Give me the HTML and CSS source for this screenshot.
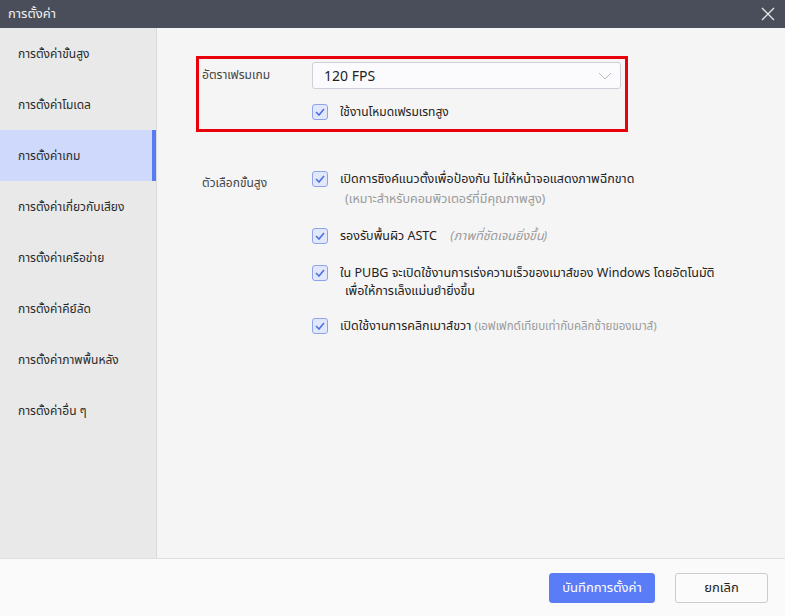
FILE: index.html
```html
<!DOCTYPE html>
<html lang="th">
<head>
    <meta charset="utf-8">
    <title>การตั้งค่า</title>
    <link rel="stylesheet" href="styles.css">
</head>
<body>
    <div class="window">
        <div class="titlebar">
            <div class="title">การตั้งค่า</div>
            <svg class="close" width="14" height="14" viewBox="0 0 14 14">
                <path d="M1 1 L13 13 M13 1 L1 13" stroke="#e6e7ea" stroke-width="1.3" fill="none"/>
            </svg>
        </div>

        <div class="body">
            <div class="sidebar">
                <div class="side-item">การตั้งค่าขั้นสูง</div>
                <div class="side-item">การตั้งค่าโมเดล</div>
                <div class="side-item active">การตั้งค่าเกม</div>
                <div class="side-item">การตั้งค่าเกี่ยวกับเสียง</div>
                <div class="side-item">การตั้งค่าเครือข่าย</div>
                <div class="side-item">การตั้งค่าคีย์ลัด</div>
                <div class="side-item">การตั้งค่าภาพพื้นหลัง</div>
                <div class="side-item">การตั้งค่าอื่น ๆ</div>
            </div>

            <div class="content">
                <div class="highlight">
                    <div class="row">
                        <div class="label">อัตราเฟรมเกม</div>
                        <div class="field">
                            <div class="select">
                                <span>120 FPS</span>
                                <svg width="14" height="8" viewBox="0 0 14 8">
                                    <path d="M1 1 L7 7 L13 1" stroke="#b5b8c2" stroke-width="1" fill="none"/>
                                </svg>
                            </div>
                            <div class="check">
                                <span class="box"><svg width="10" height="8" viewBox="0 0 10 8"><path d="M1 4 L4 7 L9 1" stroke="#4d6fe3" stroke-width="1.6" fill="none"/></svg></span>
                                <span class="text">ใช้งานโหมดเฟรมเรทสูง</span>
                            </div>
                        </div>
                    </div>
                </div>

                <div class="row advanced">
                    <div class="label">ตัวเลือกขั้นสูง</div>
                    <div class="field options">
                        <div class="check">
                            <span class="box"><svg width="10" height="8" viewBox="0 0 10 8"><path d="M1 4 L4 7 L9 1" stroke="#4d6fe3" stroke-width="1.6" fill="none"/></svg></span>
                            <div class="text">เปิดการซิงค์แนวตั้งเพื่อป้องกัน ไม่ให้หน้าจอแสดงภาพฉีกขาด
                                <div class="note sub">(เหมาะสำหรับคอมพิวเตอร์ที่มีคุณภาพสูง)</div>
                            </div>
                        </div>
                        <div class="check">
                            <span class="box"><svg width="10" height="8" viewBox="0 0 10 8"><path d="M1 4 L4 7 L9 1" stroke="#4d6fe3" stroke-width="1.6" fill="none"/></svg></span>
                            <div class="text">รองรับพื้นผิว ASTC <span class="note italic">(ภาพที่ชัดเจนยิ่งขึ้น)</span></div>
                        </div>
                        <div class="check">
                            <span class="box"><svg width="10" height="8" viewBox="0 0 10 8"><path d="M1 4 L4 7 L9 1" stroke="#4d6fe3" stroke-width="1.6" fill="none"/></svg></span>
                            <div class="text">ใน PUBG จะเปิดใช้งานการเร่งความเร็วของเมาส์ของ Windows โดยอัตโนมัติ<br><span class="indent">เพื่อให้การเล็งแม่นยำยิ่งขึ้น</span></div>
                        </div>
                        <div class="check">
                            <span class="box"><svg width="10" height="8" viewBox="0 0 10 8"><path d="M1 4 L4 7 L9 1" stroke="#4d6fe3" stroke-width="1.6" fill="none"/></svg></span>
                            <div class="text">เปิดใช้งานการคลิกเมาส์ขวา <span class="note small">(เอฟเฟกต์เทียบเท่ากับคลิกซ้ายของเมาส์)</span></div>
                        </div>
                    </div>
                </div>
            </div>
        </div>

        <div class="footer">
            <button class="btn primary">บันทึกการตั้งค่า</button>
            <button class="btn">ยกเลิก</button>
        </div>
    </div>
</body>
</html>
```

FILE: styles.css
```css
body {
    margin: 0;
    font-family: "Noto Sans", "Noto Sans Thai", "Noto Sans Thai UI", Tahoma, sans-serif;
    color: #333;
    font-size: 12px;
}
.window {
    width: 785px;
    height: 616px;
    display: flex;
    flex-direction: column;
    background: #fafafa;
    overflow: hidden;
}
.titlebar {
    height: 28px;
    background-color: #4a4e5b;
    color: #f0f0f2;
    display: flex;
    align-items: center;
    justify-content: space-between;
    padding: 0 10px 0 8px;
    flex-shrink: 0;
}
.title {
    font-size: 13px;
}
.body {
    display: flex;
    height: 530px;
    border-bottom: 1px solid #dedede;
}
.sidebar {
    width: 156px;
    background-color: #e9e9e9;
    border-right: 1px solid #d9d9d9;
    flex-shrink: 0;
}
.side-item {
    height: 51px;
    line-height: 51px;
    padding-left: 18px;
    font-size: 12px;
    color: #2a2a2a;
    box-sizing: border-box;
}
.side-item.active {
    background-color: #cfd9fb;
    border-right: 4px solid #5a7cf2;
}
.content {
    flex: 1;
    background-color: #f5f5f5;
    padding: 28px 0 0 39px;
}
.highlight {
    width: 432px;
    height: 76px;
    box-sizing: border-box;
    border: 3px solid #e8000b;
    padding: 3px 0 0 3px;
}
.row {
    display: flex;
}
.label {
    width: 110px;
    padding-top: 4px;
    font-size: 12px;
    color: #444;
}
.advanced {
    margin-top: 40px;
    padding-left: 6px;
}
.advanced .label {
    padding-top: 2px;
}
.field {
    width: 309px;
}
.select {
    height: 27px;
    box-sizing: border-box;
    background-color: #fbfbfd;
    border: 1px solid #cdd0d8;
    border-radius: 3px;
    display: flex;
    align-items: center;
    justify-content: space-between;
    padding: 0 8px 0 11px;
    font-size: 14px;
    color: #222;
}
.check {
    display: flex;
    align-items: flex-start;
    margin-top: 15px;
}
.options .check:first-child {
    margin-top: -1px;
}
.options .check {
    margin-top: 20px;
}
.options .check:nth-child(4) {
    margin-top: 18px;
}
.box {
    width: 16px;
    height: 16px;
    box-sizing: border-box;
    border: 1px solid #8fa3ec;
    background-color: #e2e8fb;
    border-radius: 3px;
    display: flex;
    align-items: center;
    justify-content: center;
    flex-shrink: 0;
}
.text {
    margin-left: 12px;
    font-size: 12px;
    color: #222;
    white-space: nowrap;
    line-height: 18px;
    margin-top: -1px;
}
.options .text {
    font-size: 12.5px;
}
.note {
    color: #9a9a9a;
    font-size: 12.5px;
}
.note.small {
    font-size: 11.5px;
}
.note.sub {
    padding-left: 5px;
    margin-top: 2px;
}
.italic {
    font-style: italic;
    margin-left: 10px;
}
.indent {
    padding-left: 5px;
}
.footer {
    flex: 1;
    display: flex;
    justify-content: flex-end;
    align-items: center;
    padding-right: 17px;
    gap: 20px;
}
.btn {
    height: 30px;
    width: 93px;
    font-family: inherit;
    font-size: 13px;
    border: 1px solid #ccc;
    background-color: #fbfbfb;
    border-radius: 3px;
    color: #222;
}
.btn.primary {
    width: 106px;
    background-color: #5a7cf7;
    border-color: #5a7cf7;
    color: white;
}
```
